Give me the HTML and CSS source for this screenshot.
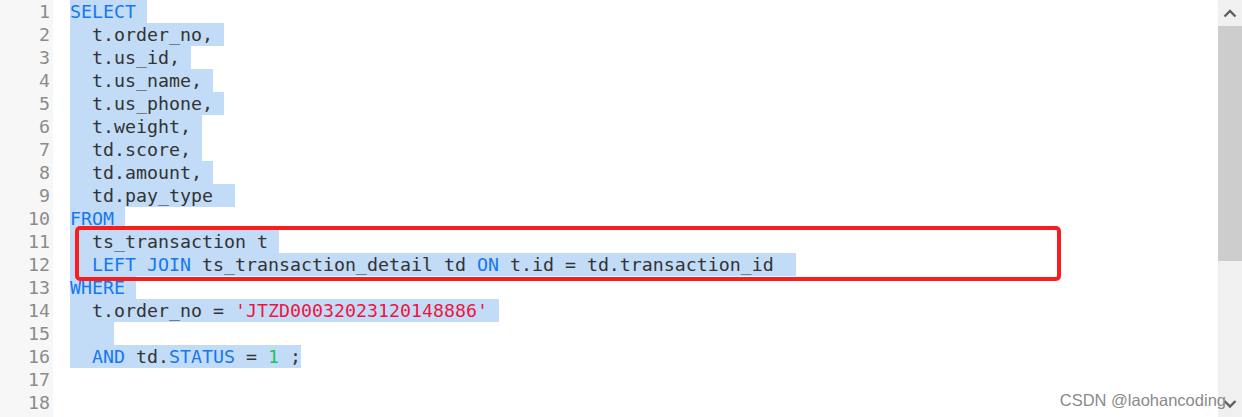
FILE: index.html
```html
<!DOCTYPE html>
<html>
<head>
<meta charset="utf-8">
<link rel="stylesheet" href="styles.css">
</head>
<body>
<div class="editor">
  <div class="gutter">
    <div class="ln">1</div><div class="ln">2</div><div class="ln">3</div><div class="ln">4</div><div class="ln">5</div><div class="ln">6</div><div class="ln">7</div><div class="ln">8</div><div class="ln">9</div><div class="ln">10</div><div class="ln">11</div><div class="ln">12</div><div class="ln">13</div><div class="ln">14</div><div class="ln">15</div><div class="ln">16</div><div class="ln">17</div><div class="ln">18</div>
  </div>
  <div class="code">
    <div class="line"><span class="sel"><span class="kw">SELECT</span> </span></div>
    <div class="line"><span class="sel">  t.order_no, </span></div>
    <div class="line"><span class="sel">  t.us_id, </span></div>
    <div class="line"><span class="sel">  t.us_name, </span></div>
    <div class="line"><span class="sel">  t.us_phone, </span></div>
    <div class="line"><span class="sel">  t.weight, </span></div>
    <div class="line"><span class="sel">  td.score, </span></div>
    <div class="line"><span class="sel">  td.amount, </span></div>
    <div class="line"><span class="sel">  td.pay_type  </span></div>
    <div class="line"><span class="sel"><span class="kw">FROM</span> </span></div>
    <div class="line"><span class="sel">  ts_transaction t </span></div>
    <div class="line"><span class="sel">  <span class="kw">LEFT JOIN</span> ts_transaction_detail td <span class="kw">ON</span> t.id = td.transaction_id  </span></div>
    <div class="line"><span class="sel"><span class="kw">WHERE</span> </span></div>
    <div class="line"><span class="sel">  t.order_no = <span class="str">'JTZD00032023120148886'</span> </span></div>
    <div class="line"><span class="sel">    </span></div>
    <div class="line"><span class="sel">  <span class="kw">AND</span> td.<span class="kw">STATUS</span> = <span class="num">1</span> ;</span></div>
    <div class="line"></div>
    <div class="line"></div>
    <div class="mark"></div>
  </div>
  <div class="scrollbar">
    <div class="arrow">
      <svg width="14" height="10" viewBox="0 0 14 10"><polyline points="1.5,8.5 7,3 12.5,8.5" fill="none" stroke="#5f5f5f" stroke-width="2.4"/></svg>
    </div>
    <div class="thumb"></div>
    <div class="track"></div>
    <div class="arrow bottom">
      <svg width="14" height="10" viewBox="0 0 14 10"><polyline points="1.5,2 7,7.5 12.5,2" fill="none" stroke="#5f5f5f" stroke-width="2.4"/></svg>
    </div>
  </div>
  <div class="watermark">CSDN @laohancoding</div>
</div>
</body>
</html>
```
FILE: styles.css
```css
html, body {
  margin: 0;
  padding: 0;
  background: #ffffff;
}
.editor {
  position: relative;
  display: flex;
  width: 1242px;
  height: 417px;
  overflow: hidden;
  font-family: "DejaVu Sans Mono", "Liberation Mono", monospace;
  font-size: 18.27px;
}
.gutter {
  width: 53px;
  flex: 0 0 53px;
  background: #f7f7f7;
  box-sizing: border-box;
  padding-right: 3px;
}
.ln {
  height: 23px;
  line-height: 23px;
  text-align: right;
  color: #8c8c8c;
}
.code {
  position: relative;
  flex: 1;
  padding-left: 17px;
}
.line {
  height: 23px;
  line-height: 23px;
  white-space: pre;
  color: #333333;
}
.sel {
  display: inline-block;
  height: 23px;
  background: #c2dcf7;
  vertical-align: top;
}
.kw { color: #1677f2; }
.str { color: #f0143c; }
.num { color: #16c45a; }
.mark {
  position: absolute;
  left: 22px;
  top: 226px;
  width: 986px;
  height: 55px;
  box-sizing: border-box;
  border: 4.5px solid #fa1d1d;
  border-radius: 5px;
}
.scrollbar {
  width: 24px;
  flex: 0 0 24px;
  background: #f0f0f0;
  display: flex;
  flex-direction: column;
}
.arrow {
  height: 26px;
  display: flex;
  justify-content: center;
  align-items: center;
}
.arrow.bottom {
  height: 26px;
  padding-top: 2px;
}
.thumb {
  height: 235px;
  background: #cdcdcd;
}
.track {
  flex: 1;
}
.watermark {
  position: absolute;
  right: 16px;
  bottom: 7px;
  font-family: "Liberation Sans", Arial, sans-serif;
  font-size: 16.5px;
  color: #8a8a8a;
  line-height: 20px;
}
```
